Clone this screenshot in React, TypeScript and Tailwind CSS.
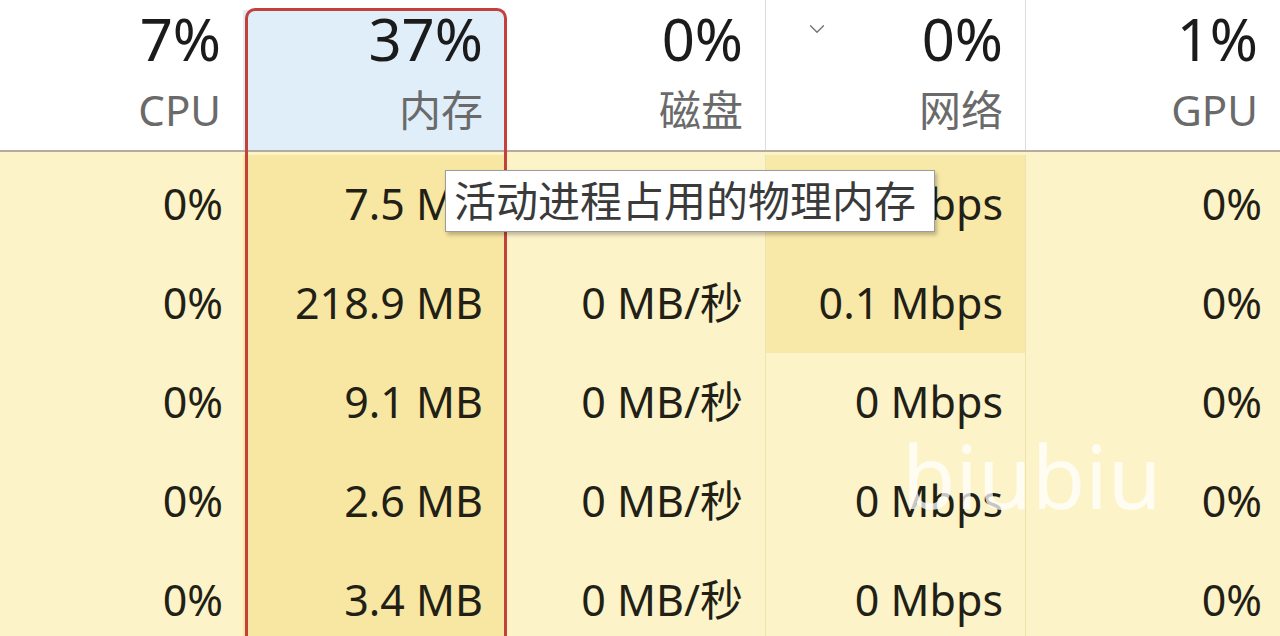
import { ChevronDown } from "lucide-react";

const cols = "grid grid-cols-[243px_262px_260px_260px_255px]";

const headers = [
  { value: "7%", label: "CPU" },
  { value: "37%", label: "内存", active: true },
  { value: "0%", label: "磁盘" },
  { value: "0%", label: "网络", sort: true },
  { value: "1%", label: "GPU" },
];

const rows = [
  ["0%", "7.5 MB", "0 MB/秒", "0.1 Mbps", "0%"],
  ["0%", "218.9 MB", "0 MB/秒", "0.1 Mbps", "0%"],
  ["0%", "9.1 MB", "0 MB/秒", "0 Mbps", "0%"],
  ["0%", "2.6 MB", "0 MB/秒", "0 Mbps", "0%"],
  ["0%", "3.4 MB", "0 MB/秒", "0 Mbps", "0%"],
];

const font = "font-['Noto_Sans','Noto_Sans_CJK_SC',sans-serif]";

function HeaderCell({
  value,
  label,
  active,
  sort,
  index,
}: {
  value: string;
  label: string;
  active?: boolean;
  sort?: boolean;
  index: number;
}) {
  return (
    <div
      className={
        "relative flex h-[150px] flex-col items-end pr-[22px] " +
        (index >= 3 ? "border-l border-[#dcdcdc] " : "") +
        (active ? "bg-[linear-gradient(to_bottom,#ffffff_0px,#ffffff_10px,#e0eefa_10px)]" : "")
      }
    >
      {sort && (
        <ChevronDown
          className="absolute top-[16px] left-[38px] size-[26px] text-[#707070]"
          strokeWidth={1.2}
        />
      )}
      <div className="text-[58px] leading-[78px] text-[#1b1b1b]">{value}</div>
      <div className="text-[42px] leading-[64px] text-[#6a6a6a]">{label}</div>
    </div>
  );
}

export default function App() {
  return (
    <div className={`relative h-[636px] w-[1280px] overflow-hidden bg-[#fdf3c9] ${font}`}>
      <div className={`${cols} border-b-2 border-[#b3ad9f] bg-white`}>
        {headers.map((h, i) => (
          <HeaderCell key={i} index={i} {...h} />
        ))}
      </div>

      <div className="pt-[3px]">
        {rows.map((row, r) => (
          <div key={r} className={`${cols} h-[99px]`}>
            {row.map((cell, c) => (
              <div
                key={c}
                className={
                  "flex items-center justify-end text-[43px] text-[#221f16] " +
                  (c === 0 ? "pr-[20px] " : c === 4 ? "pr-[18px] " : "pr-[22px] ") +
                  (c === 1 ? "bg-[#f8e7a2] " : "") +
                  (c === 3 ? "border-l border-[#efe2ae] " : "") +
                  (c === 4 ? "border-l border-[#efe2ae] " : "") +
                  (c === 3 && r < 2 ? "bg-[#f9e9a8]" : "")
                }
              >
                {cell}
              </div>
            ))}
          </div>
        ))}
      </div>

      {/* highlight annotation round the memory column */}
      <div className="pointer-events-none absolute top-[8px] left-[245px] h-[660px] w-[262px] rounded-t-[10px] border-[3px] border-[#c4403b]" />

      {/* tooltip */}
      <div className="absolute top-[170px] left-[445px] flex h-[62px] w-[490px] items-center border border-[#9c9c9c] bg-white pl-[8px] text-[42px] leading-none text-[#3a3a3a] shadow-[2px_3px_4px_rgba(0,0,0,0.25)]">
        活动进程占用的物理内存
      </div>

      {/* watermark */}
      <div className="pointer-events-none absolute top-[420px] left-[902px] font-['Noto_Sans',sans-serif] text-[87px] leading-[110px] text-white/75">
        biubiu
      </div>
    </div>
  );
}
